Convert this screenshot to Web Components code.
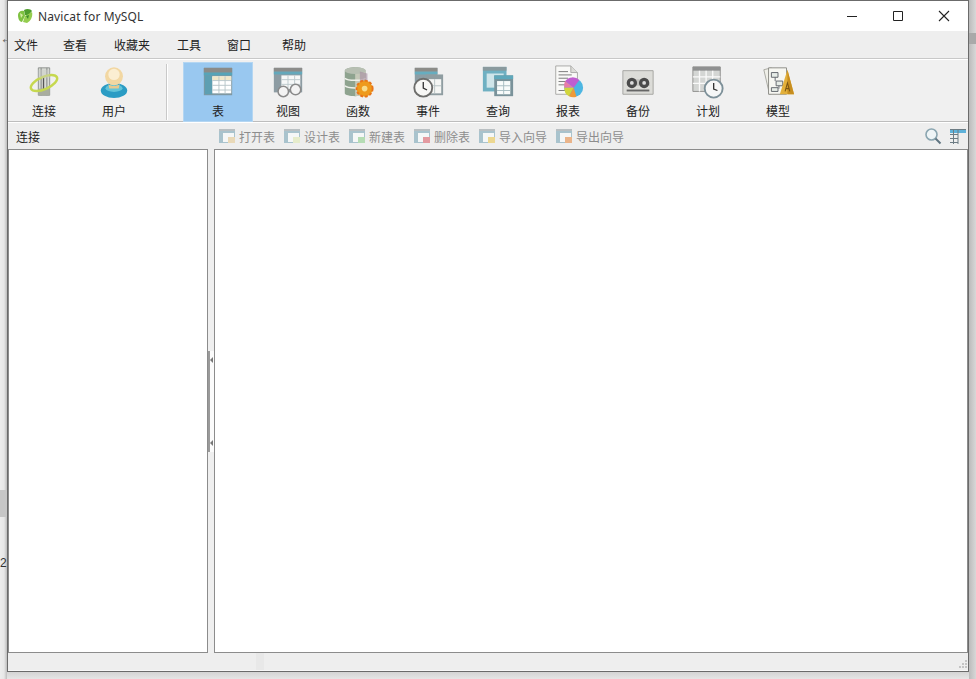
<!DOCTYPE html>
<html lang="zh-CN">
<head>
<meta charset="utf-8">
<title>Navicat for MySQL</title>
<style>
  html, body { margin: 0; padding: 0; height: 100%; overflow: hidden; background: #e4e4e4; }
  body { font: 12px "Noto Sans CJK SC", "Liberation Sans", sans-serif; color: #222; }
</style>
</head>
<body>
<nav-desktop>
  <nav-window>
    <nav-titlebar slot="title">Navicat for MySQL</nav-titlebar>
    <nav-menubar slot="menu">
      <nav-menu gap="0">文件</nav-menu>
      <nav-menu gap="25">查看</nav-menu>
      <nav-menu gap="27">收藏夹</nav-menu>
      <nav-menu gap="27">工具</nav-menu>
      <nav-menu gap="26">窗口</nav-menu>
      <nav-menu gap="31">帮助</nav-menu>
    </nav-menubar>
    <nav-toolbar slot="tools">
      <nav-tool icon="connect">连接</nav-tool>
      <nav-tool icon="user">用户</nav-tool>
      <nav-sep></nav-sep>
      <nav-tool icon="table" active>表</nav-tool>
      <nav-tool icon="view">视图</nav-tool>
      <nav-tool icon="func">函数</nav-tool>
      <nav-tool icon="event">事件</nav-tool>
      <nav-tool icon="query">查询</nav-tool>
      <nav-tool icon="report">报表</nav-tool>
      <nav-tool icon="backup">备份</nav-tool>
      <nav-tool icon="plan">计划</nav-tool>
      <nav-tool icon="model">模型</nav-tool>
    </nav-toolbar>
    <nav-actionbar slot="actions">
      <span slot="label">连接</span>
      <nav-action tint="#e9d9b8">打开表</nav-action>
      <nav-action tint="#e6eccb">设计表</nav-action>
      <nav-action tint="#b5dcb4">新建表</nav-action>
      <nav-action tint="#e39aa0">删除表</nav-action>
      <nav-action tint="#ecd790">导入向导</nav-action>
      <nav-action tint="#eab48a">导出向导</nav-action>
    </nav-actionbar>
    <nav-workspace slot="main"></nav-workspace>
    <nav-statusbar slot="status"></nav-statusbar>
  </nav-window>
</nav-desktop>

<script>
// iconos de la barra grande, 36x36
const ICONS = {
  connect: `
    <path d="M12 3h12v29H12z" fill="#d9dcd6" stroke="#8b8f8c"/>
    <path d="M15 3v29M21 3v29" stroke="#9a9e9b" stroke-width="1.5"/>
    <path d="M12 25h12v7H12z" fill="#a9ad9f"/>
    <path d="M17.5 12v14" stroke="#555" stroke-width="1.4"/>
    <ellipse cx="18" cy="19" rx="15" ry="6.5" transform="rotate(-24 18 19)" fill="none" stroke="#c6d84f" stroke-width="2.6"/>
    <path d="M12 5h12v9H12z" fill="#c9cdc8" opacity=".45"/>`,
  user: `
    <ellipse cx="18" cy="27" rx="14" ry="8" fill="#2b9cc4"/>
    <ellipse cx="18" cy="24.5" rx="9" ry="4" fill="#63c4d8"/>
    <circle cx="18" cy="12" r="9.5" fill="#f2d7a2"/>
    <circle cx="18" cy="10" r="6" fill="#fbeed2"/>
    <path d="M12 20c3 3 9 3 12 0l-1 5H13z" fill="#e8c98d"/>`,
  table: `
    <path d="M3 3h30v29H3z" fill="#7f98a2"/>
    <path d="M3 3h30v5H3z" fill="#8b8b88"/>
    <path d="M3 8h30v3H3z" fill="#56a4b8"/>
    <path d="M4 11h8v20H4z" fill="#5d9fb2"/>
    <path d="M12 12h20v18H12z" fill="#fff"/>
    <path d="M12 12h20v4H12z" fill="#f1e7c8"/>
    <path d="M12 16.500h20M12 21.500h20M12 26.500h20M19 12v18M25.500 12v18" stroke="#b8c6c9"/>`,
  view: `
    <path d="M3 3h30v26H3z" fill="#8d9ca3"/>
    <path d="M3 3h30v4H3z" fill="#8c8c8a"/>
    <path d="M3 7h30v3H3z" fill="#63a8bb"/>
    <path d="M11 11h20v16H11z" fill="#f6f8f8"/>
    <path d="M11 15.500h20M11 20.500h20M18 11v16M25 11v16" stroke="#bcc9cc"/>
    <circle cx="13" cy="28" r="5.500" fill="#f3f3f3" stroke="#8a8a8a" stroke-width="1.6"/>
    <circle cx="26" cy="26" r="5.500" fill="#f3f3f3" stroke="#8a8a8a" stroke-width="1.6"/>
    <path d="M18 27l3-1" stroke="#8a8a8a" stroke-width="1.6"/>`,
  func: `
    <path d="M4 6c0-5 22-5 22 0v24c0 4-22 4-22 0z" fill="#8ea38f"/>
    <path d="M15 3c6 0 11 1 11 3v24c0 2-5 3-11 3z" fill="#c5c9b9"/>
    <ellipse cx="15" cy="6" rx="11" ry="3.500" fill="#b7bfb2"/>
    <path d="M4 14c3 3 19 3 22 0M4 22c3 3 19 3 22 0" fill="none" stroke="#eef0ea" stroke-width="1.6"/>
    <path d="M20 7l8 2v9l-8 2z" fill="#a58ca0" opacity=".6"/>
    <circle cx="25" cy="25" r="8.500" fill="#ee9a1c"/>
    <circle cx="25" cy="25" r="8.500" fill="none" stroke="#e8741a" stroke-width="2" stroke-dasharray="3 2"/>
    <circle cx="25" cy="25" r="3" fill="#f8dc8a"/>`,
  event: `
    <path d="M4 3h24v25H4z" fill="#8c9ea5"/>
    <path d="M4 3h24v4H4z" fill="#8c8c88"/>
    <path d="M4 7h24v3H4z" fill="#67adbf"/>
    <path d="M16 10h18v22H16z" fill="#8f9da1"/>
    <path d="M19 15h13v15H19z" fill="#f5f6f4"/>
    <path d="M19 22h13M25 15v15" stroke="#b8c3c5"/>
    <circle cx="13" cy="24" r="9.500" fill="#f7f7f5" stroke="#6e6e6c" stroke-width="2"/>
    <path d="M13 18v6.500l4 2" fill="none" stroke="#333" stroke-width="1.4"/>`,
  query: `
    <path d="M2 2h25v26H2z" fill="#6fb0c2"/>
    <path d="M2 2h25v4H2z" fill="#8a9a9e"/>
    <path d="M6 9h18v15H6z" fill="#cfe5ea"/>
    <path d="M14 11h20v22H14z" fill="#7a929a"/>
    <path d="M14 11h20v4H14z" fill="#5fa8bb"/>
    <path d="M17 17h14v14H17z" fill="#f8fbfb"/>
    <path d="M17 22h14M17 27h14M24 17v14" stroke="#a6bcc1"/>`,
  report: `
    <path d="M5 1h16l7 7v23H5z" fill="#f9f9f7" stroke="#a8a8a6"/>
    <path d="M21 1v7h7" fill="#dcdcd8" stroke="#a8a8a6"/>
    <path d="M8 7h10M8 10.500h14M8 14h10M8 17.500h9M8 21h7M8 27h8" stroke="#777"/>
    <circle cx="24" cy="24" r="10" fill="#4db6e2"/>
    <path d="M24 24l-9-7a10 10 0 0 1 15-1z" fill="#c05ed0"/>
    <path d="M24 24L14 24a10 10 0 0 1 1-7z" fill="#e97ba8"/>
    <path d="M24 24l-10 0a10 10 0 0 0 5 9z" fill="#d2d63c"/>
    <path d="M24 24l-5 9a10 10 0 0 0 8 .5z" fill="#ee9a38"/>`,
  backup: `
    <path d="M2 6h32v25H2z" fill="#dcdcd8" stroke="#a4a4a0"/>
    <path d="M6 27h24" stroke="#666" stroke-width="2"/>
    <path d="M6 22l3-7h19l3 7z" fill="#c4c4c0"/>
    <circle cx="11.500" cy="19" r="5.500" fill="#4b4b4b"/>
    <circle cx="11.500" cy="19" r="2" fill="#ddd"/>
    <circle cx="24.500" cy="19" r="5.500" fill="#4b4b4b"/>
    <circle cx="24.500" cy="19" r="2" fill="#ddd"/>`,
  plan: `
    <path d="M2 2h29v26H2z" fill="#d4d6d4" stroke="#8f8f8d"/>
    <path d="M2 2h29v4H2z" fill="#8f9090"/>
    <path d="M2 12.500h29M2 19.500h29M9 6v22M16 6v22M23 6v22" stroke="#fafafa" stroke-width="1.4"/>
    <circle cx="24" cy="25" r="9.500" fill="#f6f7f7" stroke="#7d9099" stroke-width="2"/>
    <path d="M24 19v6.500l4 1.500" fill="none" stroke="#333" stroke-width="1.4"/>`,
  model: `
    <path d="M3 5l8-2 4 26-6 2z" fill="#efefe8" stroke="#a8a8a0"/>
    <path d="M8 3h19v28H8z" fill="#f7f7f2" stroke="#8a8a84"/>
    <path d="M11 8h7v5h-7zM16 17h7v5h-7zM11 24h7v4h-7z" fill="#e6ece6" stroke="#60646a"/>
    <path d="M15 13v4M19 22v3" stroke="#60646a"/>
    <path d="M28 5l7 26H20z" fill="#e3b03a"/>
    <path d="M28 5l7 26h-7z" fill="#c78e20"/>
    <path d="M25.500 28l2.500-9 2.500 9M26.500 25h3" fill="none" stroke="#7a5512" stroke-width="1.1"/>`
};

class NavDesktop extends HTMLElement{
    constructor(){
        super();
        this.attachShadow({mode:'open'});
        this.shadowRoot.innerHTML=`<style>
            :host { display: block; position: relative; width: 976px; height: 679px; overflow: hidden;
              background: linear-gradient(#d4d4d4 672px, #e6e6e6 679px); }
            .behind { position: absolute; left: 0; width: 7px; }
            .left { top: 0; height: 679px; background: linear-gradient(90deg, #ededed 0, #e7e7e7 4px, #bdbdbd 7px); }
            .band { top: 490px; height: 27px; background: #c6c6c6; }
            .arrow { top: 30px; left: 0; font: 14px "Liberation Sans", sans-serif; color: #666; width: auto; }
            .two { top: 556px; left: 0; font: 12px "Liberation Sans", sans-serif; color: #333; width: 7px; overflow: hidden; }
            .right { position: absolute; top: 0; right: 0; width: 7px; height: 679px;
              background: linear-gradient(90deg, #bbb, #d8d8d8); }
            .scrap { position: absolute; top: 33px; right: 0; width: 7px; height: 11px; background: #a9a9a9; }
        </style>
        <div class="behind left"></div>
        <div class="behind band"></div>
        <div class="behind arrow">←</div>
        <div class="behind two">2</div>
        <div class="right"></div>
        <div class="scrap"></div>
        <slot></slot>`;
    }
}

class NavWindow extends HTMLElement{
    constructor(){
        super();
        this.attachShadow({mode:'open'});
        this.shadowRoot.innerHTML=`<style>
            /* la ventana esta sobre el escritorio */
            :host { position: absolute; left: 7px; top: 0; width: 962px; height: 672px; box-sizing: border-box;
              display: flex; flex-direction: column; border: 1px solid #6b6b6b; background: #eeeeee; }
        </style>
        <slot name="title"></slot><slot name="menu"></slot><slot name="tools"></slot>
        <slot name="actions"></slot><slot name="main"></slot><slot name="status"></slot>`;
    }
}

class NavTitlebar extends HTMLElement{
    constructor(){
        super();
        this.attachShadow({mode:'open'});
        this.shadowRoot.innerHTML=`<style>
            :host { display: flex; align-items: center; height: 30px; background: #fff; flex: none; }
            .logo { margin-left: 8px; width: 18px; height: 18px; }
            .name { margin-left: 4px; font: 12px "Noto Sans", sans-serif; letter-spacing: .1px; color: #333; flex: 1; }
            .btn { width: 46px; height: 30px; display: flex; align-items: center; justify-content: center; }
        </style>
        <svg class="logo" viewBox="0 0 18 18">
            <path d="M2 8c0-3 3-5 6-4l1 5-3 6c-3 0-4-4-4-7z" fill="#7fc241"/>
            <path d="M8 3c3-2 7-1 8 1l-4 5-3-1z" fill="#4f9e2e"/>
            <path d="M9 9l7-4c1 4-1 9-5 11l-4-1z" fill="#94cd4e"/>
            <path d="M4 6l3 2-2 3z" fill="#d8eea8"/>
            <path d="M10 9l3-1-1 4z" fill="#3c8a2a"/>
        </svg>
        <span class="name"><slot></slot></span>
        <div class="btn"><svg width="12" height="12"><path d="M1 6.500h10" stroke="#222"/></svg></div>
        <div class="btn"><svg width="12" height="12"><path d="M1.500 1.500h9v9h-9z" fill="none" stroke="#222"/></svg></div>
        <div class="btn" style="margin-right:1px"><svg width="12" height="12"><path d="M1 1l10 10M11 1L1 11" stroke="#222" stroke-width="1.100"/></svg></div>`;
    }
}

class NavMenubar extends HTMLElement{
    constructor(){
        super();
        this.attachShadow({mode:'open'});
        this.shadowRoot.innerHTML=`<style>
            :host { display: flex; align-items: center; height: 27px; padding-left: 6px; flex: none;
              background: #eeeeee; border-bottom: 1px solid #c8c8c8; box-shadow: inset 0 0 0 #fff; }
        </style><slot></slot>`;
    }
}

class NavMenu extends HTMLElement{
    constructor(){
        super();
        this.attachShadow({mode:'open'});
        this.shadowRoot.innerHTML=`<style>
            :host { display: block; font-size: 12px; line-height: 16px; color: #222; }
        </style><slot></slot>`;
    }
    connectedCallback(){
        this.style.marginLeft=(this.getAttribute('gap')||0)+'px';
    }
}

class NavToolbar extends HTMLElement{
    constructor(){
        super();
        this.attachShadow({mode:'open'});
        this.shadowRoot.innerHTML=`<style>
            :host { display: flex; height: 63px; box-sizing: border-box; padding: 2px 0 0 1px; flex: none;
              background: #f0f0f0; border-top: 1px solid #fff; border-bottom: 1px solid #bdbdbd; }
        </style><slot></slot>`;
    }
}

class NavSep extends HTMLElement{
    constructor(){
        super();
        this.attachShadow({mode:'open'});
        this.shadowRoot.innerHTML=`<style>
            :host { display: block; width: 34px; height: 56px; margin-top: 2px; position: relative; }
            div { width: 1px; height: 100%; margin-left: 17px; background: #c9c9c9; box-shadow: 1px 0 0 #fff; }
        </style><div></div>`;
    }
}

class NavTool extends HTMLElement{
    constructor(){
        super();
        this.attachShadow({mode:'open'});
        let icon=ICONS[this.getAttribute('icon')]||'';
        this.shadowRoot.innerHTML=`<style>
            :host { display: flex; flex-direction: column; align-items: center; width: 70px; height: 60px;
              box-sizing: border-box; padding-top: 3px; font-size: 12px; color: #222; }
            :host([active]) { background: #99c8f0; box-shadow: inset 0 0 0 1px #b4d6f2; }
            svg { width: 34px; height: 34px; display: block; }
            span { margin-top: 4px; line-height: 16px; }
        </style>
        <svg viewBox="0 0 36 36">${icon}</svg>
        <span><slot></slot></span>`;
    }
}

class NavActionbar extends HTMLElement{
    constructor(){
        super();
        this.attachShadow({mode:'open'});
        this.shadowRoot.innerHTML=`<style>
            :host { display: flex; align-items: center; height: 27px; flex: none; background: #eeeeee;
              border-top: 1px solid #fff; box-sizing: border-box; padding-left: 8px; font-size: 12px; color: #222; }
            .label { width: 203px; flex: none; }
            .list { display: flex; gap: 9px; flex: 1; }
            .tools { display: flex; align-items: center; gap: 7px; margin-right: 1px; }
        </style>
        <div class="label"><slot name="label"></slot></div>
        <div class="list"><slot></slot></div>
        <div class="tools">
            <svg width="18" height="18" viewBox="0 0 18 18">
                <circle cx="7.500" cy="7.500" r="5.500" fill="#eef4f6" stroke="#8aa5b0" stroke-width="1.600"/>
                <path d="M11.500 11.500l5 5" stroke="#5f7480" stroke-width="2"/>
            </svg>
            <svg width="18" height="18" viewBox="0 0 18 18">
                <path d="M1 2h16v4H1z" fill="#5fb2da"/>
                <path d="M1 2.500h16M1 7.500h8M1 11.500h8M1 15.500h8M4.500 2v15M9 2v15" stroke="#6d7c84"/>
            </svg>
        </div>`;
    }
}

class NavAction extends HTMLElement{
    constructor(){
        super();
        this.attachShadow({mode:'open'});
        let tint=this.getAttribute('tint')||'#ddd';
        this.shadowRoot.innerHTML=`<style>
            :host { display: flex; align-items: center; gap: 4px; font-size: 12px; color: #8d8d8d; }
            svg { width: 16px; height: 16px; display: block; }
        </style>
        <svg viewBox="0 0 16 16">
            <path d="M0 1h16v14H0z" fill="#a9c3cd"/>
            <path d="M0 1h16v2H0z" fill="#b9bfc2"/>
            <path d="M4 5h11v9H4z" fill="#f5f7f7"/>
            <path d="M9 9h7v6H9z" fill="${tint}"/>
        </svg>
        <slot></slot>`;
    }
}

class NavWorkspace extends HTMLElement{
    constructor(){
        super();
        this.attachShadow({mode:'open'});
        this.shadowRoot.innerHTML=`<style>
            :host { display: flex; flex: 1; min-height: 0; background: #efefef; }
            .pane { background: #fff; border: 1px solid #8c8c8c; box-sizing: border-box; }
            .tree { width: 200px; flex: none; }
            .content { flex: 1; margin-right: 0; }
            .split { width: 6px; flex: none; display: flex; align-items: center; }
            .grip { width: 6px; height: 101px; box-sizing: border-box; background: #fbfbfb;
              border-left: 2px solid #9a9a9a; display: flex; flex-direction: column; justify-content: space-between;
              padding: 6px 0; }
            .grip i { display: block; width: 0; height: 0; border: 3px solid transparent; border-left: 0;
              border-right: 3px solid #777; }
        </style>
        <div class="pane tree"></div>
        <div class="split"><div class="grip"><i></i><i></i></div></div>
        <div class="pane content"></div>`;
    }
}

class NavStatusbar extends HTMLElement{
    constructor(){
        super();
        this.attachShadow({mode:'open'});
        this.shadowRoot.innerHTML=`<style>
            :host { display: flex; height: 18px; flex: none; background: #eeeeee; box-sizing: border-box;
              border-bottom: 1px solid #f8f8f8; }
            .a { width: 248px; }
            .b { width: 8px; background: #e8e8e8; }
            .c { flex: 1; display: flex; justify-content: flex-end; align-items: flex-end; }
            svg { display: block; }
        </style>
        <div class="a"></div><div class="b"></div>
        <div class="c"><svg width="12" height="12"><path d="M9 2h2v2H9zM6 5h2v2H6zM9 5h2v2H9zM3 8h2v2H3zM6 8h2v2H6zM9 8h2v2H9z" fill="#c4c4c4"/></svg></div>`;
    }
}

customElements.define('nav-desktop',NavDesktop);
customElements.define('nav-window',NavWindow);
customElements.define('nav-titlebar',NavTitlebar);
customElements.define('nav-menubar',NavMenubar);
customElements.define('nav-menu',NavMenu);
customElements.define('nav-toolbar',NavToolbar);
customElements.define('nav-sep',NavSep);
customElements.define('nav-tool',NavTool);
customElements.define('nav-actionbar',NavActionbar);
customElements.define('nav-action',NavAction);
customElements.define('nav-workspace',NavWorkspace);
customElements.define('nav-statusbar',NavStatusbar);
</script>
</body>
</html>
